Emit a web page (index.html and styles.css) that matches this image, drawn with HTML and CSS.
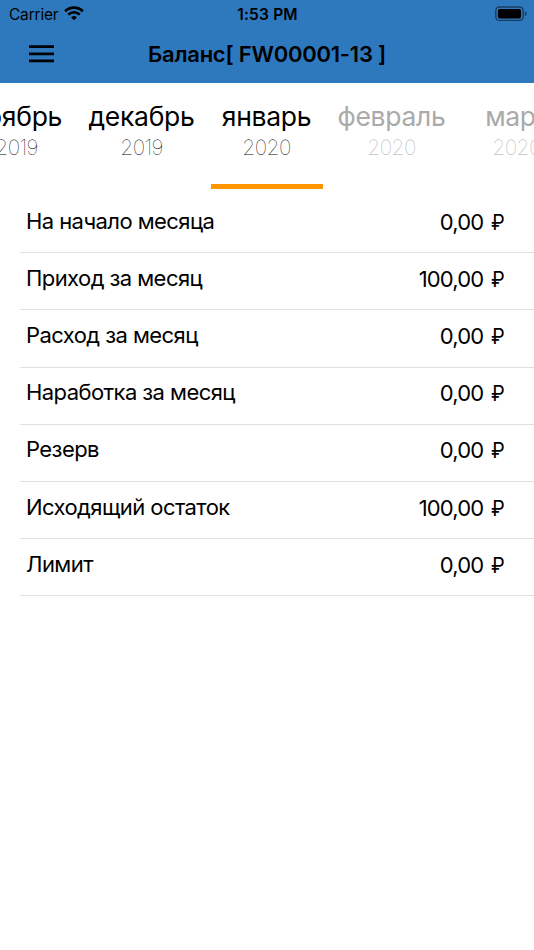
FILE: index.html
```html
<!DOCTYPE html>
<html lang="ru">
<head>
<meta charset="utf-8">
<title>Баланс</title>
<link rel="stylesheet" href="styles.css">
</head>
<body>
<header class="header">
  <div class="status">
    <div class="carrier">
      <span class="carrier-name">Carrier</span>
      <svg class="wifi" width="20" height="15" viewBox="0 0 20 15" fill="none" stroke="#000" stroke-width="2.7"><path d="M1.1 5.3a12.7 12.7 0 0 1 17.8 0"/><path d="M4.3 8.6a8.1 8.1 0 0 1 11.4 0"/><path d="M7.1 11.4a4.2 4.2 0 0 1 5.8 0L10 14.3z" fill="#000" stroke="none"/></svg>
    </div>
    <div class="time">1:53 PM</div>
    <svg class="battery" width="32" height="16" viewBox="0 0 32 16"><rect x=".8" y="1" width="27.4" height="13.4" rx="3.6" fill="none" stroke="#000" stroke-opacity=".5" stroke-width="1.3"/><rect x="2.9" y="3" width="23.2" height="9.5" rx="1.9"/><path d="M29.8 5.5q1.9.6 1.9 2.3t-1.9 2.3z" fill-opacity=".5"/></svg>
  </div>
  <div class="toolbar">
    <button class="menu" aria-label="Меню"><svg width="25" height="18" viewBox="0 0 25 18"><path d="M0 1.6h25M0 8.8h25M0 15.8h25" stroke="#000" stroke-width="2.8"/></svg></button>
    <h1 class="title">Баланс[ FW00001-13 ]</h1>
    <span></span>
  </div>
</header>
<nav class="months">
  <div class="month"><span class="name">ноябрь</span><span class="year">2019</span></div>
  <div class="month"><span class="name">декабрь</span><span class="year">2019</span></div>
  <div class="month active"><span class="name">январь</span><span class="year">2020</span></div>
  <div class="month future"><span class="name">февраль</span><span class="year">2020</span></div>
  <div class="month future"><span class="name">март</span><span class="year">2020</span></div>
</nav>
<ul class="list">
  <li class="row"><span class="label">На начало месяца</span><span class="value">0,00 <span class="currency">₽</span></span></li>
  <li class="row"><span class="label">Приход за месяц</span><span class="value">100,00 <span class="currency">₽</span></span></li>
  <li class="row"><span class="label">Расход за месяц</span><span class="value">0,00 <span class="currency">₽</span></span></li>
  <li class="row"><span class="label">Наработка за месяц</span><span class="value">0,00 <span class="currency">₽</span></span></li>
  <li class="row"><span class="label">Резерв</span><span class="value">0,00 <span class="currency">₽</span></span></li>
  <li class="row"><span class="label">Исходящий остаток</span><span class="value">100,00 <span class="currency">₽</span></span></li>
  <li class="row"><span class="label">Лимит</span><span class="value">0,00 <span class="currency">₽</span></span></li>
</ul>
</body>
</html>
```

FILE: styles.css
```css
* { box-sizing: border-box; }
body {
  margin: 0;
  background: #fff;
  color: #000;
  font-family: Inter, "Noto Sans", sans-serif;
  overflow: hidden;
}
.header { height: 83px; background: #2e78be; }
.status {
  display: grid;
  grid-template-columns: 1fr auto 1fr;
  align-items: center;
  height: 28px;
  padding: 0 7px 0 9px;
}
.carrier { display: flex; align-items: center; gap: 6px; }
.carrier-name { font-size: 15.5px; letter-spacing: -.2px; }
.wifi { margin-top: -1px; }
.time { margin-left: -1px; font-size: 15.5px; font-weight: 600; letter-spacing: .2px; }
.battery { justify-self: end; margin-top: -1px; }
.toolbar {
  display: grid;
  grid-template-columns: 1fr auto 1fr;
  align-items: center;
  height: 52px;
}
.menu {
  display: flex;
  width: 25px;
  margin: 0 0 0 29px;
  padding: 0;
  border: 0;
  background: none;
}
.title {
  margin: 0;
  font-size: 22px;
  font-weight: 600;
  line-height: 28px;
  letter-spacing: -.23px;
  white-space: pre;
}
.months {
  display: flex;
  justify-content: center;
  height: 106px;
  overflow: hidden;
}
.month {
  display: flex;
  flex-direction: column;
  align-items: center;
  flex: 0 0 125px;
  height: 106px;
  padding-top: 17px;
}
.name { margin-right: 1px; font-size: 26.5px; line-height: 32px; letter-spacing: -.28px; }
.year { margin-right: 1px; font-size: 21px; font-weight: 100; line-height: 32px; letter-spacing: -.6px; }
.active::after {
  content: "";
  width: 112px;
  height: 5px;
  margin-top: auto;
  background: #ff9500;
}
.future .name { color: #aaa; }
.future .year { color: #aaa; }
.list { margin: 7px 0 0 20px; padding: 0; list-style: none; }
.row {
  display: flex;
  justify-content: space-between;
  height: 57.2px;
  padding: 9.6px 29.5px 0 6px;
  border-bottom: 1px solid #e0e0e0;
  font-size: 22px;
  line-height: 30px;
}
.label { letter-spacing: -.57px; }
.value { padding-top: 1px; letter-spacing: -.85px; word-spacing: 1.2px; }
.currency { display: inline-block; font-size: 21px; letter-spacing: 0; transform: scaleX(.93); transform-origin: right; }
```
